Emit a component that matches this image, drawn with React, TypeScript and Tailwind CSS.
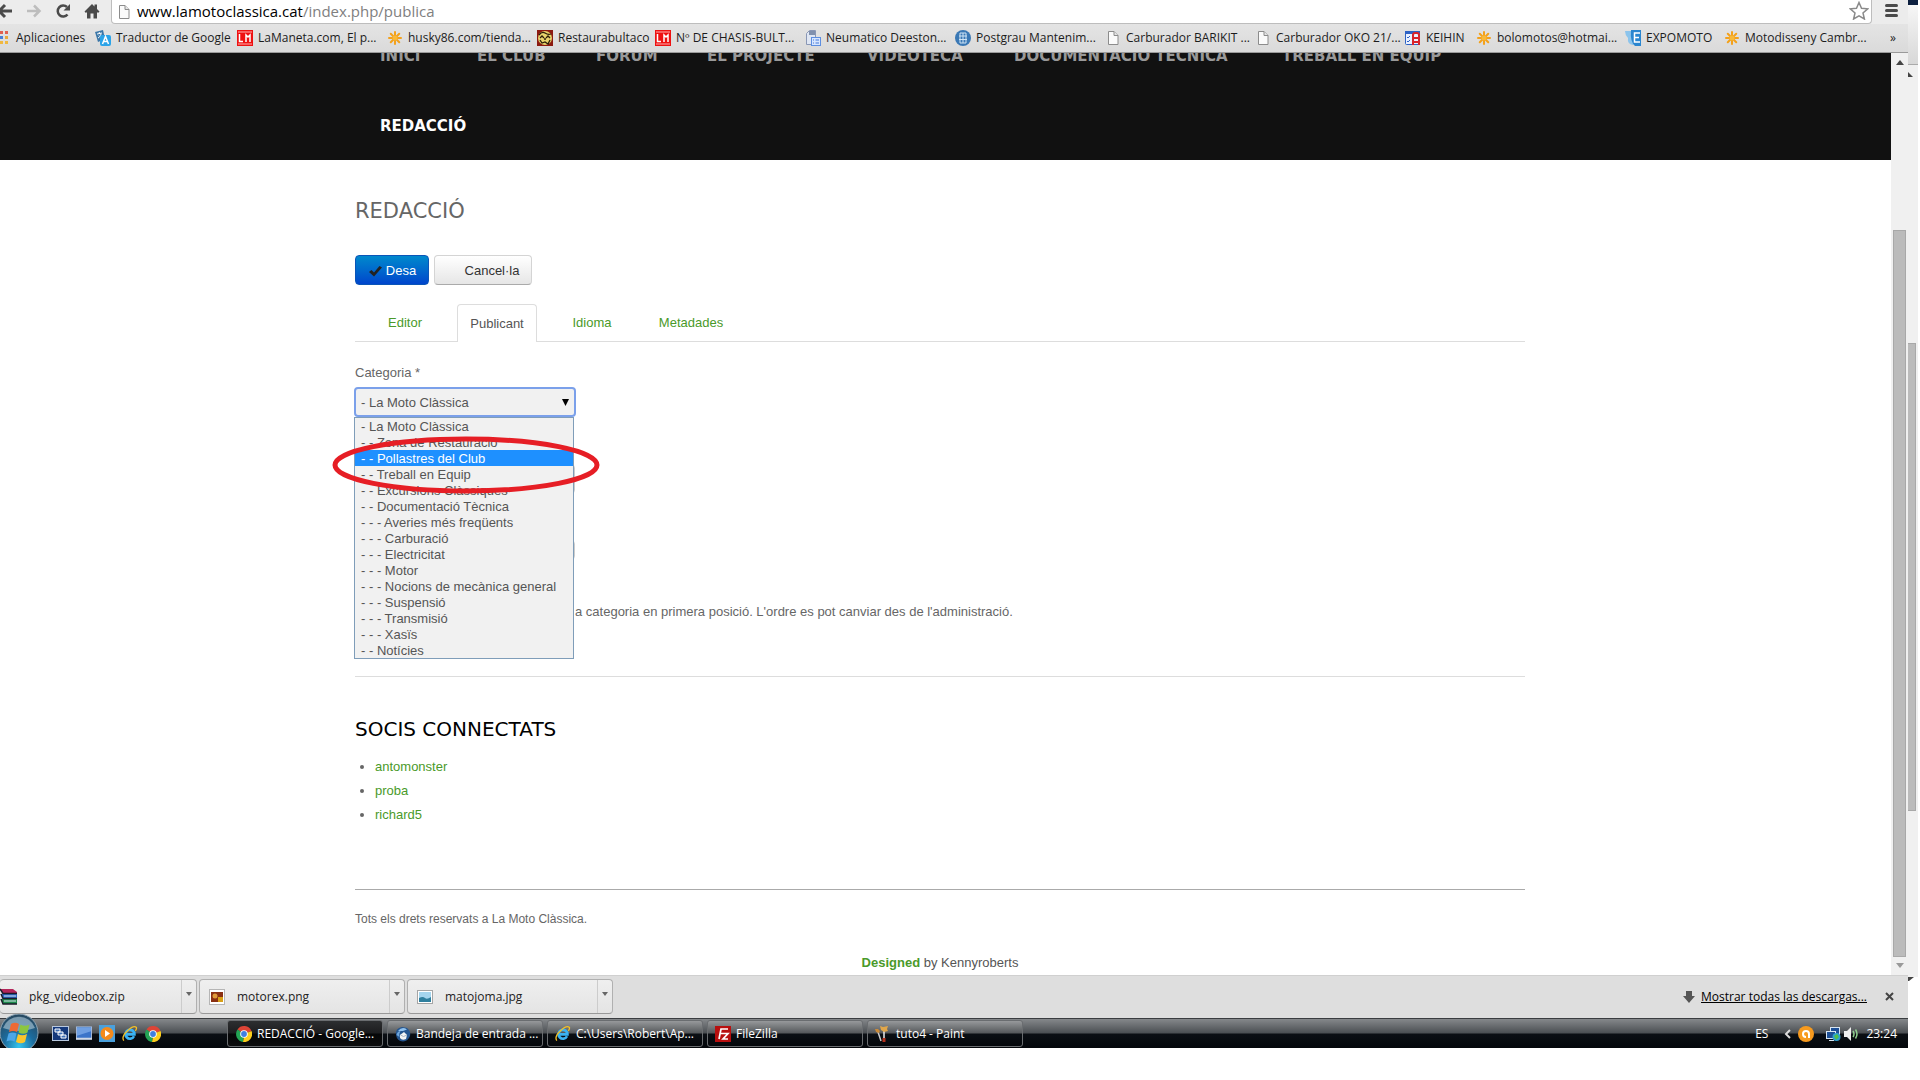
import React from "react";

const uiFont = "font-['Open_Sans','Noto_Sans',sans-serif]";

function PageIcon() {
  return (
    <svg width="16" height="16" viewBox="0 0 16 16" className="shrink-0">
      <path d="M3.5 1.5h5.5l4 4v9H3.5z" fill="#fbfbfb" stroke="#8c8c8c" />
      <path d="M9 1.5v4h4" fill="#e6e6e6" stroke="#8c8c8c" />
    </svg>
  );
}

function AppsIcon() {
  const c = ["#e0604f", "#e0604f", "#4a7fd6", "#e8a93a", "#f0b840", "#f0b840"];
  return (
    <svg width="10" height="14" viewBox="0 0 10 14" className="shrink-0">
      {[0, 1, 2].map((r) => (
        <g key={r}>
          <rect x="0" y={r * 5} width="3" height="3" fill={c[r * 2]} />
          <rect x="5" y={r * 5} width="3" height="3" fill={c[r * 2 + 1]} />
        </g>
      ))}
    </svg>
  );
}

function TranslateIcon() {
  return (
    <svg width="16" height="16" viewBox="0 0 16 16" className="shrink-0">
      <path d="M0 2l8-2 2 9-7 3z" fill="#3a76a8" />
      <path d="M2 4l5-1M4 2l1 2M3 8c2-1 2.500-2 3-4M4 5.500C5 7 6 7.500 7.500 7.500" stroke="#fff" fill="none" />
      <rect x="5" y="5" width="11" height="11" rx="2" fill="#2ba3e8" />
      <path d="M7.500 14l3-7.500 3 7.500M8.500 11.500h4" stroke="#fff" strokeWidth="1.500" fill="none" />
    </svg>
  );
}

function LmIcon() {
  return (
    <svg width="16" height="16" viewBox="0 0 16 16" className="shrink-0">
      <rect width="16" height="16" fill="#ee1111" />
      <path d="M1 2h14M1 14h14" stroke="#ffb0b0" />
      <path d="M2.500 4v7.500H6M9 12V5l2 2 2-2v7" stroke="#fff" strokeWidth="1.500" fill="none" />
    </svg>
  );
}

function SunIcon() {
  return (
    <svg width="16" height="16" viewBox="0 0 16 16" className="shrink-0">
      {[0, 45, 90, 135].map((a) => (
        <path key={a} d="M8 2v12" stroke="#f3a11b" strokeWidth="2" strokeLinecap="round" transform={`rotate(${a} 8 8)`} />
      ))}
      <circle cx="8" cy="8" r="2.500" fill="#f8b93a" />
    </svg>
  );
}

function BultacoIcon() {
  return (
    <svg width="16" height="16" viewBox="0 0 16 16" className="shrink-0">
      <rect width="16" height="16" fill="#8c1a10" />
      <circle cx="8" cy="8" r="7" fill="#e8d36c" />
      <path d="M2 5q3-4 6-2t6 1M3 8l2-2 2 2M9 8l2-2 2 2M3 10l2 3 3-1 3 2 2-4M7 9h2" stroke="#2b1c08" strokeWidth="1.300" fill="none" />
    </svg>
  );
}

function DocsIcon() {
  return (
    <svg width="16" height="16" viewBox="0 0 16 16" className="shrink-0">
      <path d="M1.500 14.500v-11l3-3h6v14z" fill="#dfe6f3" stroke="#8a97b5" />
      <path d="M4 1h6v4H4z" fill="#8090ad" />
      <rect x="6.500" y="7.500" width="9" height="8" fill="#d7e6ff" stroke="#5d8ee0" />
      <path d="M8 10h1M10.500 10H14M8 13h1M10.500 13H14" stroke="#4478d8" />
    </svg>
  );
}

function GlobeIcon() {
  return (
    <svg width="16" height="16" viewBox="0 0 16 16" className="shrink-0">
      <circle cx="8" cy="8" r="8" fill="#3a78b5" />
      <path d="M5 3h6v10H5zM8 3v10M4 6h8M4 9.500h8" stroke="#cfe4f5" fill="none" />
    </svg>
  );
}

function KeihinIcon() {
  return (
    <svg width="16" height="16" viewBox="0 0 16 16" className="shrink-0">
      <rect x="0.500" y="1.500" width="14" height="13" rx="1" fill="#eaf1ff" stroke="#2d62c4" />
      <rect x="0" y="1" width="15" height="3" fill="#2d62c4" />
      <path d="M2 7l1 1 2-2M2 11l1 1 2-2" stroke="#2d62c4" fill="none" />
      <path d="M8 15V5q0-2 2-2h2q2 0 2 2v10M8 8h6M8 12h6" stroke="#d8232a" strokeWidth="2" fill="none" />
    </svg>
  );
}

function ExpoIcon() {
  return (
    <svg width="16" height="16" viewBox="0 0 16 16" className="shrink-0">
      <path d="M0 1h8v14q-6-1-5-7Q0 5 0 1z" fill="#8cc4ec" />
      <path d="M6 0h10v16h-6Q5 12 6 0z" fill="#2a86d0" />
      <path d="M15 3H9.500v9H15M9.500 7.500H14" stroke="#fff" strokeWidth="1.500" fill="none" />
    </svg>
  );
}

const bookmarks = [
  { label: "Aplicaciones", icon: <AppsIcon />, cls: "w-[95px] gap-[6px]" },
  { label: "Traductor de Google", icon: <TranslateIcon />, cls: "w-[142px] gap-[5px]" },
  { label: "LaManeta.com, El p...", icon: <LmIcon />, cls: "w-[150px] gap-[5px]" },
  { label: "husky86.com/tienda...", icon: <SunIcon />, cls: "w-[150px] gap-[5px]" },
  { label: "Restaurabultaco", icon: <BultacoIcon />, cls: "w-[118px] gap-[5px]" },
  { label: "Nº DE CHASIS-BULT...", icon: <LmIcon />, cls: "w-[150px] gap-[5px]" },
  { label: "Neumatico Deeston...", icon: <DocsIcon />, cls: "w-[150px] gap-[5px]" },
  { label: "Postgrau Mantenim...", icon: <GlobeIcon />, cls: "w-[150px] gap-[5px]" },
  { label: "Carburador BARIKIT ...", icon: <PageIcon />, cls: "w-[150px] gap-[5px]" },
  { label: "Carburador OKO 21/...", icon: <PageIcon />, cls: "w-[150px] gap-[5px]" },
  { label: "KEIHIN", icon: <KeihinIcon />, cls: "w-[71px] gap-[5px]" },
  { label: "bolomotos@hotmai...", icon: <SunIcon />, cls: "w-[149px] gap-[5px]" },
  { label: "EXPOMOTO", icon: <ExpoIcon />, cls: "w-[99px] gap-[5px]" },
  { label: "Motodisseny Cambr...", icon: <SunIcon />, cls: "w-[150px] gap-[5px]" },
];

function Toolbar() {
  return (
    <div className="flex h-6 items-start bg-[#ececec]">
      <div className="flex h-[21px] w-[111px] shrink-0 items-center">
        <button aria-label="Enrere" className="w-5">
          <svg width="14" height="16" viewBox="0 0 14 16">
            <path d="M-2 8h14M5 2L-1 8l6 6" stroke="#4a4a4a" strokeWidth="3" fill="none" />
          </svg>
        </button>
        <button aria-label="Endavant" className="flex w-7 justify-center">
          <svg width="16" height="16" viewBox="0 0 16 16">
            <path d="M1 8h12M8 2.500L13.500 8 8 13.500" stroke="#bdbdbd" strokeWidth="2.500" fill="none" />
          </svg>
        </button>
        <button aria-label="Recarrega" className="flex w-[30px] justify-center">
          <svg width="16" height="16" viewBox="0 0 16 16">
            <path d="M12.500 11.500A5.500 5.500 0 1 1 12 4" stroke="#4a4a4a" strokeWidth="2.500" fill="none" />
            <path d="M15 1v6.500H8.500z" fill="#4a4a4a" />
          </svg>
        </button>
        <button aria-label="Inici" className="flex w-7 justify-center">
          <svg width="16" height="16" viewBox="0 0 16 16">
            <path d="M8 1L0.500 8.500 2 10l1-1v6.500h3.500v-5h3v5H13V9l1 1 1.500-1.500L13 6V1.500h-2.500V3.500z" fill="#4a4a4a" />
          </svg>
        </button>
      </div>
      <div className="flex h-6 min-w-0 flex-1 items-center rounded-b border-x border-b border-[#bdbdbd] bg-white pl-1 pr-[2px]">
        <PageIcon />
        <div role="textbox" aria-label="URL" className="ml-[5px] min-w-0 flex-1 whitespace-nowrap pb-[2px] text-[15px] leading-[20px] text-black">
          www.lamotoclassica.cat<span className="text-[#808080]">/index.php/publica</span>
        </div>
        <button aria-label="Preferit" className="pb-[2px]">
          <svg width="20" height="19" viewBox="0 0 20 19">
            <path d="M10 1.500l2.500 5.700 6.200.6-4.700 4.100 1.400 6.100L10 14.800 4.600 18 6 11.900 1.300 7.800l6.200-.6z" fill="#fff" stroke="#8a8a8a" strokeWidth="1.500" />
          </svg>
        </button>
      </div>
      <button aria-label="Menú" className="flex h-[21px] w-9 shrink-0 flex-col items-center justify-center gap-[2px] pl-[3px]">
        <span className="h-[3px] w-[13px] rounded-sm bg-[#4a4a4a]" />
        <span className="h-[3px] w-[13px] rounded-sm bg-[#4a4a4a]" />
        <span className="h-[3px] w-[13px] rounded-sm bg-[#4a4a4a]" />
      </button>
    </div>
  );
}

const navItems = [
  { t: "INICI", w: "w-[97px]" },
  { t: "EL CLUB", w: "w-[119px]" },
  { t: "FORUM", w: "w-[111px]" },
  { t: "EL PROJECTE", w: "w-[160px]" },
  { t: "VIDEOTECA", w: "w-[147px]" },
  { t: "DOCUMENTACIÓ TÉCNICA", w: "w-[268px]" },
  { t: "TREBALL EN EQUIP", w: "w-[211px]" },
];

const options = [
  "- La Moto Clàssica",
  "- - Zona de Restauració",
  "- - Pollastres del Club",
  "- - Treball en Equip",
  "- - Excursions Clàssiques",
  "- - Documentació Tècnica",
  "- - - Averies més freqüents",
  "- - - Carburació",
  "- - - Electricitat",
  "- - - Motor",
  "- - - Nocions de mecànica general",
  "- - - Suspensió",
  "- - - Transmisió",
  "- - - Xasïs",
  "- - Notícies",
];

function CategoryField() {
  return (
    <div>
      <label htmlFor="cat" className="mt-[21px] block leading-5">Categoria *</label>
      <div className="relative -ml-px mt-1 w-[222px]">
        <select id="cat" className="block h-[30px] w-full appearance-none rounded-sm border-2 border-[#7ba0ea] bg-[#f1f1f1] pl-[5px] pt-[2px] text-[13px] text-[#555]">
          <option>- La Moto Clàssica</option>
        </select>
        <svg width="7" height="7" viewBox="0 0 8 8" className="pointer-events-none absolute right-[7px] top-3">
          <path d="M0 0h8L4 8z" fill="#000" />
        </svg>
        <ul role="listbox" className="absolute left-0 top-[30px] z-10 w-[220px] border border-[#7f9db9] bg-[#f1f1f1]">
          {options.map((o, i) => (
            <li
              key={o}
              role="option"
              aria-selected={i === 2}
              className={i === 2 ? "h-4 whitespace-nowrap bg-[#1e90ff] pl-[6px] leading-[18px] text-white" : "h-4 whitespace-nowrap pl-[6px] leading-[18px] text-[#555]"}
            >
              {o}
            </li>
          ))}
        </ul>
        <svg width="272" height="60" viewBox="0 0 272 60" className="absolute -left-6 top-12 z-20">
          <ellipse cx="136" cy="30" rx="131" ry="26" fill="none" stroke="#e61e25" strokeWidth="5" />
        </svg>
      </div>
    </div>
  );
}

function Page() {
  return (
    <div className="min-w-0 flex-1 bg-white font-['Liberation_Sans',Arial,sans-serif] text-[13px] text-[#666]">
      <header className="h-[107px] overflow-hidden bg-[#111] pr-[11px]">
        <nav className="mx-auto -mt-8 flex max-w-[1170px] flex-wrap pl-[25px] font-['DejaVu_Sans',Verdana,sans-serif] text-[15px] font-bold leading-[70px] text-[#999]">
          {navItems.map((n) => (
            <div key={n.t} className={`${n.w} shrink-0 whitespace-nowrap`}>
              <a href="#">{n.t}</a>
            </div>
          ))}
          <a href="#" className="text-white">REDACCIÓ</a>
        </nav>
      </header>
      <div className="pr-[11px]">
        <main className="mx-auto max-w-[1170px]">
          <h1 className="pt-[31px] font-['DejaVu_Sans',Verdana,sans-serif] text-[21px] leading-10">REDACCIÓ</h1>
          <div className="mt-6 flex gap-[5px]">
            <button className="flex h-[30px] w-[74px] items-center justify-center gap-1 rounded border border-[#0a55b8] bg-linear-to-b from-[#0088cc] to-[#0044cc] pt-[2px] text-white">
              <svg width="14" height="12" viewBox="0 0 14 12">
                <path d="M1 7l2.500-2L6 7.500 11.500 1 14 2.500 6 11.500z" fill="#222" />
              </svg>
              Desa
            </button>
            <button className="h-[30px] w-[98px] rounded border border-[#d4d4d4] border-b-[#aaa] bg-linear-to-b from-white to-[#e6e6e6] pl-[18px] pt-[2px] text-[#333]">
              Cancel·la
            </button>
          </div>
          <div role="tablist" className="mt-[19px] flex h-[38px] items-end border-b border-[#ddd] leading-[38px] text-[#4a9a2a]">
            <button role="tab" className="-mb-px h-[38px] w-[102px] pr-[2px] text-center">Editor</button>
            <button role="tab" aria-selected="true" className="-mb-px h-[38px] w-[80px] rounded-t border border-b-0 border-[#ddd] bg-white text-center leading-[36px] text-[#555]">Publicant</button>
            <button role="tab" className="-mb-px h-[38px] w-[110px] text-center">Idioma</button>
            <button role="tab" className="-mb-px h-[38px] w-[88px] text-center">Metadades</button>
          </div>
          <CategoryField />
          <input aria-label="Estat" className="mt-[47px] block h-[30px] w-[220px] rounded-sm border border-[#ccc] bg-white" />
          <input aria-label="Accés" className="mt-[46px] block h-5 w-[220px] rounded-sm border border-[#ccc] bg-white" />
          <p className="mt-[42px] pl-[220px] leading-5">
            a categoria en primera posició. L'ordre es pot canviar des de l'administració.
          </p>
          <hr className="mt-[54px] border-[#ddd]" />
          <h2 className="mt-8 font-['DejaVu_Sans',Verdana,sans-serif] text-[20px] leading-10 text-black">SOCIS CONNECTATS</h2>
          <ul className="mt-[6px] list-disc pl-5 leading-6">
            {["antomonster", "proba", "richard5"].map((u) => (
              <li key={u}><a href="#" className="text-[#4a9a2a]">{u}</a></li>
            ))}
          </ul>
          <footer className="mt-[62px] border-t border-[#aaa] pb-[2px] pt-[19px]">
            <p className="text-[12px] leading-5">Tots els drets reservats a La Moto Clàssica.</p>
            <p className="mt-6 text-center leading-5 text-[#555]">
              <a href="#" className="font-bold text-[#4a9a2a]">Designed</a> by Kennyroberts
            </p>
          </footer>
        </main>
      </div>
    </div>
  );
}

function RarIcon() {
  return (
    <svg width="17" height="17" viewBox="0 0 17 17">
      <path d="M0 1h13l4 3v2H3z" fill="#b3265a" />
      <path d="M1 6h16v4H3z" fill="#2c6cc8" />
      <path d="M1 11h16v5H3z" fill="#1e8a4c" />
      <path d="M0 1l3 4.500h14M1 6l2 4.500h14M1 11l2 5h14" stroke="#1b1b2a" strokeWidth="1.500" fill="none" />
      <path d="M4 8h12M4 13h12" stroke="#d9e4ee" />
    </svg>
  );
}

function PngIcon() {
  return (
    <svg width="16" height="16" viewBox="0 0 16 16">
      <rect x="0.500" y="0.500" width="15" height="15" fill="#fff" stroke="#b5b5b5" />
      <rect x="2" y="3" width="12" height="10" fill="#8a2f12" />
      <circle cx="6" cy="7" r="2.500" fill="#e09a3a" />
      <rect x="9" y="8" width="5" height="5" fill="#d9a016" />
    </svg>
  );
}

function JpgIcon() {
  return (
    <svg width="16" height="16" viewBox="0 0 16 16">
      <rect x="0.500" y="1.500" width="15" height="13" fill="#fff" stroke="#a5a5a5" />
      <rect x="2" y="3" width="12" height="10" fill="#a5d5ee" />
      <path d="M2 9q4-2 6 0t6-1v5H2z" fill="#2f7f9e" />
    </svg>
  );
}

const downloads = [
  { t: "pkg_videobox.zip", icon: <RarIcon />, cls: "w-[197px] border-l-0", pad: "gap-[12px]" },
  { t: "motorex.png", icon: <PngIcon />, cls: "w-[206px]", pad: "gap-3 pl-[9px]" },
  { t: "matojoma.jpg", icon: <JpgIcon />, cls: "w-[206px]", pad: "gap-3 pl-[9px]" },
];

function Downloads() {
  return (
    <div className="flex h-[43px] items-center gap-[2px] border-t border-[#d0d0d0] bg-[#dedede] pb-px text-[12px] text-[#222]">
      {downloads.map((d) => (
        <div key={d.t} className={`${d.cls} flex h-[35px] rounded-sm border border-[#b0b0b0] border-b-[#999] bg-linear-to-b from-[#efefef] to-[#e4e4e4]`}>
          <button className={`${d.pad} flex min-w-0 flex-1 items-center whitespace-nowrap`}>{d.icon}{d.t}</button>
          <button aria-label="Opcions" className="flex w-[15px] justify-center border-l border-[#ccc] pt-3">
            <svg width="6" height="4" viewBox="0 0 6 4"><path d="M0 0h6L3 4z" fill="#666" /></svg>
          </button>
        </div>
      ))}
      <div className="ml-auto flex items-center pr-[14px]">
        <svg width="12" height="12" viewBox="0 0 12 12"><path d="M3 0h6v5h3l-6 7-6-7h3z" fill="#555" /></svg>
        <a href="#" className="ml-[6px] whitespace-nowrap text-black underline">Mostrar todas las descargas...</a>
        <button aria-label="Tanca" className="ml-[18px]">
          <svg width="9" height="9" viewBox="0 0 9 9"><path d="M1 1l7 7M8 1L1 8" stroke="#444" strokeWidth="2" /></svg>
        </button>
      </div>
    </div>
  );
}

function ChromeIcon() {
  return (
    <svg width="16" height="16" viewBox="0 0 16 16" className="shrink-0">
      <path d="M8 8L1.500 3.500A8 8 0 0 1 15.500 5z" fill="#dd4436" />
      <path d="M8 8L15.500 5A8 8 0 0 1 7 16z" fill="#fccd1c" />
      <path d="M8 8L7 16A8 8 0 0 1 1.500 3.500z" fill="#23a455" />
      <circle cx="8" cy="8" r="3.800" fill="#fff" />
      <circle cx="8" cy="8" r="2.900" fill="#3f7fe0" />
    </svg>
  );
}

function IeIcon() {
  return (
    <svg width="16" height="18" viewBox="0 0 18 18" className="shrink-0">
      <path d="M13.500 11.500A5 5 0 1 1 14 9.500H5" stroke="#3bb3f2" strokeWidth="3" fill="none" />
      <path d="M2 16.500Q-1 12 6 5.500T16 1.500q1 1-1 4" stroke="#f4c025" strokeWidth="1.500" fill="none" />
    </svg>
  );
}

function ThunderbirdIcon() {
  return (
    <svg width="16" height="16" viewBox="0 0 16 16" className="shrink-0">
      <path d="M1 9Q0 2 7 1l5 1q4 3 3 8-2 5-7 5.500Q2 15 1 9z" fill="#24558f" />
      <path d="M3 5Q7 0 12 3.500L8 5z" fill="#8fc1ee" />
      <path d="M1.500 9q1-4 4-4-2 3-1 6z" fill="#6ea6dd" />
      <path d="M5 9l4-3 3 3-1 4q-4 2-6-1z" fill="#f4f4f4" />
      <path d="M5.500 9l3 1.500L12 9" stroke="#a9b6c4" fill="none" />
    </svg>
  );
}

function FileZillaIcon() {
  return (
    <svg width="16" height="16" viewBox="0 0 16 16" className="shrink-0">
      <rect width="16" height="16" fill="#b80f0f" />
      <path d="M4 13L6 3h7M5 7.500h4.500M8.500 7.500H13L8 13h5" stroke="#fff" strokeWidth="1.700" fill="none" />
    </svg>
  );
}

function PaintIcon() {
  return (
    <svg width="16" height="18" viewBox="0 0 16 18" className="shrink-0">
      <path d="M3 7l3 9" stroke="#ccc" strokeWidth="1.500" />
      <path d="M9 5v9" stroke="#eee" strokeWidth="1.500" />
      <path d="M9 13v4" stroke="#b3301b" strokeWidth="3" />
      <path d="M5 1l3 1 5-1-1 3 1 2-4 1-3-2z" fill="#e0a64a" />
      <path d="M0 4l3 0 2 2-1 2-3-1z" fill="#c98a3a" />
    </svg>
  );
}

const tasks = [
  { t: "REDACCIÓ - Google...", icon: <ChromeIcon />, active: true },
  { t: "Bandeja de entrada ...", icon: <ThunderbirdIcon /> },
  { t: "C:\\Users\\Robert\\Ap...", icon: <IeIcon /> },
  { t: "FileZilla", icon: <FileZillaIcon /> },
  { t: "tuto4 - Paint", icon: <PaintIcon /> },
];

function Taskbar() {
  return (
    <div className="flex h-[30px] items-center border-t border-[#3a3d40] bg-[linear-gradient(#85888b_0%,#4b4f53_48%,#0b0f14_52%,#04070b_100%)] text-[12px] text-white">
      <button aria-label="Inicia" className="relative h-[29px] w-[52px] shrink-0">
        <svg width="40" height="34" viewBox="0 0 40 34" className="absolute bottom-0 left-0">
          <defs>
            <radialGradient id="orb" cx="50%" cy="85%" r="80%">
              <stop offset="0" stopColor="#35c5ee" />
              <stop offset="0.500" stopColor="#1c6c9e" />
              <stop offset="1" stopColor="#274a63" />
            </radialGradient>
          </defs>
          <circle cx="19" cy="19" r="19" fill="url(#orb)" stroke="#8fa6b5" />
          <path d="M3 14A17 17 0 0 1 35 14Q19 20 3 14z" fill="#a9c3d2" opacity="0.650" />
          <path d="M11 10q4-2.500 8 0l-2 8q-4-2-8 0z" fill="#ee6a35" />
          <path d="M20.500 10.500q4 2.500 9 0l-2 8q-4 2.500-9 0z" fill="#8cc63f" />
          <path d="M8.500 19.500q4-2 8 0l-2 8q-4-2-8 0z" fill="#4da6e8" />
          <path d="M18 20q4 2.500 9 0l-2 8q-4 2.500-9 0z" fill="#fbc52c" />
        </svg>
      </button>
      <div className="flex w-[175px] shrink-0 items-center gap-[7px]">
        <button aria-label="Finestres">
          <svg width="17" height="15" viewBox="0 0 17 15">
            <rect x="0.500" y="0.500" width="16" height="14" fill="#15397c" stroke="#b8c8de" />
            <path d="M3 3h5v3H3zM6 6h5v3H6zM9 9h5v3H9z" fill="#3f6fb5" stroke="#fff" />
          </svg>
        </button>
        <button aria-label="Escriptori">
          <svg width="16" height="15" viewBox="0 0 17 15">
            <rect x="0.500" y="0.500" width="16" height="13" fill="#3b74c9" stroke="#a9bddb" />
            <path d="M1 1h15v4L1 10z" fill="#6f9fe2" />
            <path d="M0 13h17" stroke="#cfd8e6" strokeWidth="2" />
          </svg>
        </button>
        <button aria-label="Reproductor">
          <svg width="16" height="17" viewBox="0 0 16 17">
            <rect width="16" height="17" fill="#4aa0dc" />
            <circle cx="8" cy="8.500" r="6.500" fill="#f48a1c" />
            <path d="M6 5l5 3.500L6 12z" fill="#fff" />
          </svg>
        </button>
        <button aria-label="Explorer"><IeIcon /></button>
        <button aria-label="Chrome"><ChromeIcon /></button>
      </div>
      <div className="flex gap-1">
        {tasks.map((k) => (
          <button
            key={k.t}
            className={
              k.active
                ? "flex h-[27px] w-[156px] items-center gap-[5px] whitespace-nowrap rounded-[3px] border border-[#6a6d70] bg-[linear-gradient(#2d2f31_0%,#1c1d1f_48%,#050607_52%,#0c0d0e_100%)] pl-2"
                : "flex h-[27px] w-[156px] items-center gap-[5px] whitespace-nowrap rounded-[3px] border border-[#6a6d70] bg-[linear-gradient(#97999b_0%,#55585b_48%,#0b0f14_52%,#04070b_100%)] pl-[7px]"
            }
          >
            {k.icon}
            {k.t}
          </button>
        ))}
      </div>
      <div className="ml-auto flex items-center pr-[11px]">
        <span>ES</span>
        <svg width="8" height="10" viewBox="0 0 8 10" className="ml-4"><path d="M6 1L2 5l4 4" stroke="#ddd" strokeWidth="2" fill="none" /></svg>
        <svg width="16" height="16" viewBox="0 0 16 16" className="ml-[6px]">
          <circle cx="8" cy="8" r="8" fill="#f79a1e" />
          <path d="M11 12V8a3 3 0 1 0-3 3" stroke="#fff" strokeWidth="2" fill="none" />
        </svg>
        <svg width="15" height="16" viewBox="0 0 15 16" className="ml-3">
          <rect x="4.500" y="1.500" width="9" height="7" fill="#1d4f96" stroke="#d8e6f2" />
          <rect x="0.500" y="5.500" width="9" height="7" fill="#1d4f96" stroke="#d8e6f2" />
          <path d="M3 14.500h5" stroke="#d8e6f2" />
          <circle cx="10.500" cy="11" r="4" fill="#2f9fd0" />
          <path d="M8 10l3-2 2 3-3 3z" fill="#4fbf4a" />
        </svg>
        <svg width="15" height="16" viewBox="0 0 15 16" className="ml-[3px]">
          <path d="M0 5h3l4-4v14l-4-4H0z" fill="#eee" />
          <path d="M9 5q2 3 0 6M11.500 3.500q3 4.500 0 9" stroke="#8fd08f" strokeWidth="1.500" fill="none" />
        </svg>
        <span className="ml-[7px]">23:24</span>
      </div>
    </div>
  );
}

export default function App() {
  return (
    <div className={`${uiFont} flex items-start overflow-hidden bg-white pr-[2px]`}>
      <div className="min-w-0 flex-1">
        <Toolbar />
        <div className="flex h-[29px] items-center overflow-hidden border-b border-[#9a9a9a] bg-linear-to-b from-[#e4e4e4] to-[#dadada] text-[12px] text-[#1c1c1c]">
          {bookmarks.map((b) => (
            <a key={b.label} href="#" className={`${b.cls} flex shrink-0 items-center whitespace-nowrap`}>
              {b.icon}
              {b.label}
            </a>
          ))}
          <button aria-label="Més marcadors" className="ml-auto pr-3">»</button>
        </div>
        <div className="flex">
          <Page />
          <div className="flex w-[17px] shrink-0 flex-col items-center bg-[#f0f0f0] py-[7px]">
            <svg width="8" height="5" viewBox="0 0 8 5"><path d="M0 5h8L4 0z" fill="#444" /></svg>
            <div className="mb-[6px] mt-[165px] w-[13px] flex-1 border border-[#a8a8a8] bg-[#bbb]" />
            <svg width="8" height="5" viewBox="0 0 8 5"><path d="M0 0h8L4 5z" fill="#999" /></svg>
          </div>
        </div>
        <Downloads />
        <Taskbar />
      </div>
      <div className="w-[10px] shrink-0">
        <div className="h-[5px] bg-[#0c1f3f]" />
        <div className="h-[60px] border-b border-[#aaa] bg-linear-to-b from-[#f6f6f6] to-[#d8d8d8]" />
        <div className="bg-[#f0f0f0] pb-[166px] pt-[7px]">
          <svg width="6" height="5" viewBox="0 0 6 5"><path d="M0 0l5 5H0z" fill="#444" /></svg>
          <div className="mt-[266px] h-[468px] w-2 border border-l-0 border-[#a8a8a8] bg-[#bbb]" />
        </div>
        <svg width="6" height="4" viewBox="0 0 6 4"><path d="M0 0h6L1 4H0z" fill="#444" /></svg>
      </div>
    </div>
  );
}
